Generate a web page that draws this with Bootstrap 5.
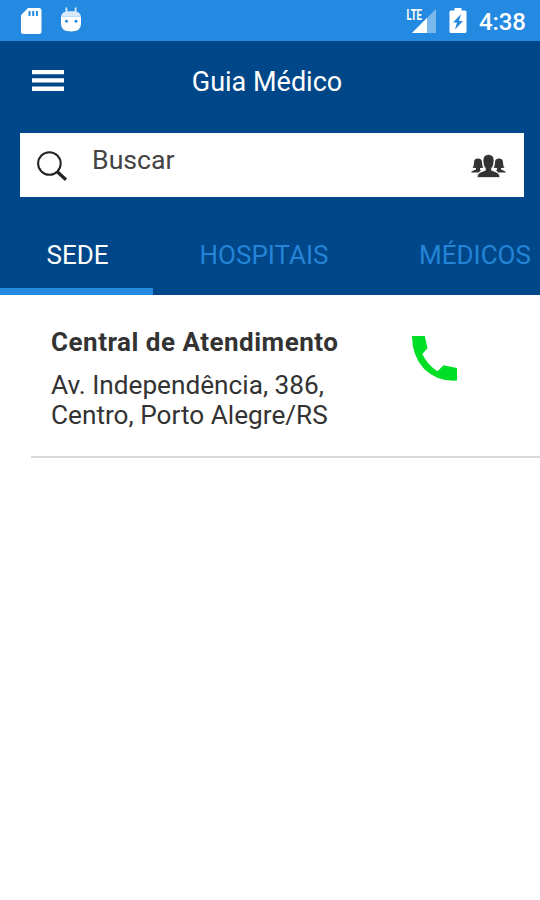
<!DOCTYPE html>
<html lang="pt-BR">
<head>
<meta charset="utf-8">
<meta name="viewport" content="width=device-width, initial-scale=1">
<title>Guia Médico</title>
<link href="https://cdn.jsdelivr.net/npm/bootstrap@5.3.0/dist/css/bootstrap.min.css" rel="stylesheet">
<style>
body{font-family:Roboto,"Liberation Sans",sans-serif;color:#333;background:#fff;width:540px;height:900px;overflow:hidden}
svg{display:block;flex:none}
.status-bar{height:41px;background:#2489e0;padding:0 14px 0 20px}
.clock{font-size:24px;font-weight:500;line-height:39px;padding-top:3px;width:47px;white-space:nowrap;letter-spacing:-.1px}
.battery{margin:0 12px 0 13px}
.app-head{background:#004789;height:254px}
.title-bar{height:92px;padding:0 38px 14px 32px}
.title-bar h1{font-size:27px;font-weight:400;line-height:32px;padding-top:4px!important}
.menu-btn{width:32px}
.search-box{height:64px;margin:0 16px 0 20px;padding:1px 18px 0 16px}
.search-box .hint{font-size:26.700px;line-height:32px;color:#444;margin:-12px 0 0 24px}
.tabs-row{height:98px;width:640px}
.tabs-row .nav-link{height:98px;padding:35px 0 0;border-bottom:7px solid transparent;color:#2384d8;font-size:26px;line-height:46px;white-space:nowrap}
.tabs-row .nav-link.active{color:#fff;border-color:#2489e0}
.tab-a{width:153px;text-indent:2px}.tab-b{width:222px}.tab-c{width:200px}
.place{margin-left:31px;height:163px;padding:31px 80px 0 20px;border-bottom:2px solid #d9d9d9!important}
.place h2{font-size:26px;font-weight:700;letter-spacing:.5px;line-height:32px;margin:0 0 12px;white-space:nowrap}
.place p{font-size:26.200px;line-height:30px;margin:0;color:#333}
.call-icon{margin:10px 3px 0 0}
</style>
</head>
<body>
<div class="status-bar d-flex align-items-center justify-content-between text-white">
  <div class="d-flex align-items-center">
    <svg width="22" height="27" viewBox="0 0 22 27"><path fill="#fff" fill-rule="evenodd" d="M8 1h11q2.500 0 2.500 2.500v21q0 2.500-2.500 2.500H3.500Q1 27 1 24.500V8zM8.500 4v5h2V4zm3.700 0v5h2V4zm3.700 0v5h2V4z"/></svg>
    <svg class="ms-3" width="26" height="27" viewBox="0 0 26 27"><path fill="#fff" fill-opacity=".82" d="M3 9.500Q4 5.500 7.500 4.500V.5h1.800v3.700h7.400V.5h1.800v4Q22 5.500 23 9.500z"/><path fill="#fff" fill-rule="evenodd" d="M3 9.500h20V17q0 7.500-10 7.500T3 17zM8.500 12.700a1.500 1.500 0 1 0 .01 0zm9.500 0a1.500 1.500 0 1 0 .01 0z"/></svg>
  </div>
  <div class="d-flex align-items-center">
    <svg width="31" height="27" viewBox="0 0 31 27"><path fill="#fff" fill-opacity=".4" d="M31 2v24H7z"/><path fill="#fff" d="M22 11v15H7z"/><path fill="#2489e0" d="M0 0h18v13H0z"/><text x="1.500" y="12.500" textLength="15.500" lengthAdjust="spacingAndGlyphs" fill="#fff" font-size="15" font-weight="700">LTE</text></svg>
    <svg class="battery" width="18" height="27" viewBox="0 0 18 27"><path fill="#fff" fill-rule="evenodd" d="M5.500 1h7v2.500H16q1.500 0 1.500 1.500v19.500q0 1.500-1.500 1.500H2Q.5 26 .5 24.500V5q0-1.500 1.500-1.500h3.500zM12 7 4 15.500H8L6 22.500l8-8.500H10z"/></svg>
    <span class="clock">4:38</span>
  </div>
</div>

<header class="app-head overflow-hidden">
  <div class="title-bar d-flex align-items-center justify-content-between">
    <button class="menu-btn btn p-0 border-0" aria-label="Menu">
      <svg width="32" height="24" viewBox="0 0 32 24" fill="#fff"><path d="M0 2h32v4.300H0zM0 10.200h32v4.300H0zM0 18.600h32v4.300H0z"/></svg>
    </button>
    <h1 class="m-0 text-white">Guia Médico</h1>
    <span class="menu-btn"></span>
  </div>
  <div class="search-box d-flex align-items-center bg-white">
    <svg width="32" height="32" viewBox="0 0 32 32" fill="none" stroke="#222"><circle cx="13.400" cy="13.500" r="11.300" stroke-width="2"/><path d="m21 21.500 9 8.300" stroke-width="3.200"/></svg>
    <span class="hint flex-grow-1">Buscar</span>
    <svg width="35" height="24" viewBox="0 0 35 24" fill="#333"><g id="person"><path d="M0 18.500Q.5 16.800 5 15.500V14L1.500 13.700Q3 12 3 8.500 3 4.500 7 4.500t4 4q0 3.500 1.500 5.200L9 14v1.500l1 .8-2.500 2.200z"/></g><use href="#person" transform="matrix(-1 0 0 1 35 0)"/><path stroke="#fff" stroke-width=".7" d="M6 23.500q.3-4.300 3.500-5.300l5-2V14.500Q12 12 12 6.500 12 .5 17.500.5T23 6.500q0 5.500-2.500 8v1.700l5 2q3.200 1 3.500 5.300z"/></svg>
  </div>
  <nav class="tabs-row nav flex-nowrap text-center">
    <a class="nav-link tab-a active" href="#">SEDE</a>
    <a class="nav-link tab-b" href="#">HOSPITAIS</a>
    <a class="nav-link tab-c" href="#">MÉDICOS</a>
  </nav>
</header>

<main>
  <article class="place d-flex align-items-start justify-content-between">
    <div>
      <h2>Central de Atendimento</h2>
      <p>Av. Independência, 386,<br>Centro, Porto Alegre/RS</p>
    </div>
    <svg class="call-icon" width="45" height="45" viewBox="0 0 45 45"><path fill="#00df25" d="M0 0H12.800L15.500 12.300 10.300 18Q15.500 29 25.500 35.200L31.500 29.300 45 32V44.600Q26 46 12.300 33.200Q0 20 0 0z"/></svg>
  </article>
</main>
<script src="https://cdn.jsdelivr.net/npm/bootstrap@5.3.0/dist/js/bootstrap.bundle.min.js"></script>
</body>
</html>
